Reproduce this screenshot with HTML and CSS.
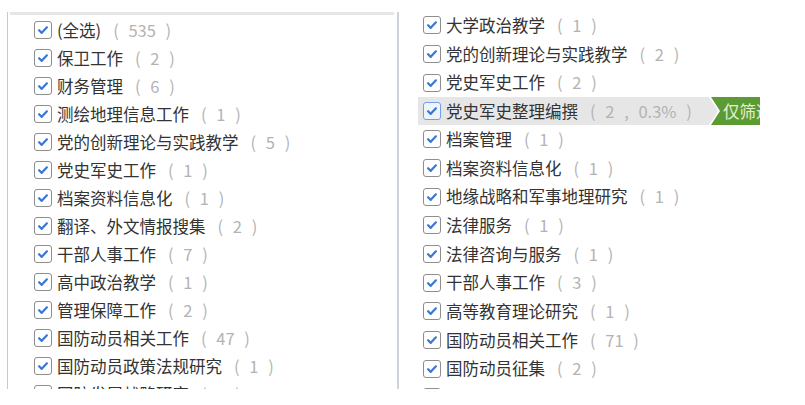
FILE: index.html
```html
<!DOCTYPE html>
<html lang="zh-CN">
<head>
<meta charset="utf-8">
<title>筛选</title>
<link rel="stylesheet" href="styles.css">
</head>
<body>
<div class="wrap">
  <div class="panel left">
    <div class="topbar"></div>
    <ul class="list">
      <li class="row"><span class="cb"><svg viewBox="0 0 18 18"><path d="M4.6 9.2 L7.6 12.2 L13.4 6"/></svg></span><span class="lbl">(全选)</span><span class="cnt">( 535 )</span></li>
      <li class="row"><span class="cb"><svg viewBox="0 0 18 18"><path d="M4.6 9.2 L7.6 12.2 L13.4 6"/></svg></span><span class="lbl">保卫工作</span><span class="cnt">( 2 )</span></li>
      <li class="row"><span class="cb"><svg viewBox="0 0 18 18"><path d="M4.6 9.2 L7.6 12.2 L13.4 6"/></svg></span><span class="lbl">财务管理</span><span class="cnt">( 6 )</span></li>
      <li class="row"><span class="cb"><svg viewBox="0 0 18 18"><path d="M4.6 9.2 L7.6 12.2 L13.4 6"/></svg></span><span class="lbl">测绘地理信息工作</span><span class="cnt">( 1 )</span></li>
      <li class="row"><span class="cb"><svg viewBox="0 0 18 18"><path d="M4.6 9.2 L7.6 12.2 L13.4 6"/></svg></span><span class="lbl">党的创新理论与实践教学</span><span class="cnt">( 5 )</span></li>
      <li class="row"><span class="cb"><svg viewBox="0 0 18 18"><path d="M4.6 9.2 L7.6 12.2 L13.4 6"/></svg></span><span class="lbl">党史军史工作</span><span class="cnt">( 1 )</span></li>
      <li class="row"><span class="cb"><svg viewBox="0 0 18 18"><path d="M4.6 9.2 L7.6 12.2 L13.4 6"/></svg></span><span class="lbl">档案资料信息化</span><span class="cnt">( 1 )</span></li>
      <li class="row"><span class="cb"><svg viewBox="0 0 18 18"><path d="M4.6 9.2 L7.6 12.2 L13.4 6"/></svg></span><span class="lbl">翻译、外文情报搜集</span><span class="cnt">( 2 )</span></li>
      <li class="row"><span class="cb"><svg viewBox="0 0 18 18"><path d="M4.6 9.2 L7.6 12.2 L13.4 6"/></svg></span><span class="lbl">干部人事工作</span><span class="cnt">( 7 )</span></li>
      <li class="row"><span class="cb"><svg viewBox="0 0 18 18"><path d="M4.6 9.2 L7.6 12.2 L13.4 6"/></svg></span><span class="lbl">高中政治教学</span><span class="cnt">( 1 )</span></li>
      <li class="row"><span class="cb"><svg viewBox="0 0 18 18"><path d="M4.6 9.2 L7.6 12.2 L13.4 6"/></svg></span><span class="lbl">管理保障工作</span><span class="cnt">( 2 )</span></li>
      <li class="row"><span class="cb"><svg viewBox="0 0 18 18"><path d="M4.6 9.2 L7.6 12.2 L13.4 6"/></svg></span><span class="lbl">国防动员相关工作</span><span class="cnt">( 47 )</span></li>
      <li class="row"><span class="cb"><svg viewBox="0 0 18 18"><path d="M4.6 9.2 L7.6 12.2 L13.4 6"/></svg></span><span class="lbl">国防动员政策法规研究</span><span class="cnt">( 1 )</span></li>
      <li class="row"><span class="cb"><svg viewBox="0 0 18 18"><path d="M4.6 9.2 L7.6 12.2 L13.4 6"/></svg></span><span class="lbl">国防发展战略研究</span><span class="cnt">( 1 )</span></li>
    </ul>
  </div>
  <div class="panel right">
    <ul class="list">
      <li class="row"><span class="cb"><svg viewBox="0 0 18 18"><path d="M4.6 9.2 L7.6 12.2 L13.4 6"/></svg></span><span class="lbl">大学政治教学</span><span class="cnt">( 1 )</span></li>
      <li class="row"><span class="cb"><svg viewBox="0 0 18 18"><path d="M4.6 9.2 L7.6 12.2 L13.4 6"/></svg></span><span class="lbl">党的创新理论与实践教学</span><span class="cnt">( 2 )</span></li>
      <li class="row"><span class="cb"><svg viewBox="0 0 18 18"><path d="M4.6 9.2 L7.6 12.2 L13.4 6"/></svg></span><span class="lbl">党史军史工作</span><span class="cnt">( 2 )</span></li>
      <li class="row hl"><span class="cb"><svg viewBox="0 0 18 18"><path d="M4.6 9.2 L7.6 12.2 L13.4 6"/></svg></span><span class="lbl">党史军史整理编撰</span><span class="cnt">( 2 , 0.3% )</span><span class="tag"><span class="tag-in">仅筛选此项</span></span></li>
      <li class="row"><span class="cb"><svg viewBox="0 0 18 18"><path d="M4.6 9.2 L7.6 12.2 L13.4 6"/></svg></span><span class="lbl">档案管理</span><span class="cnt">( 1 )</span></li>
      <li class="row"><span class="cb"><svg viewBox="0 0 18 18"><path d="M4.6 9.2 L7.6 12.2 L13.4 6"/></svg></span><span class="lbl">档案资料信息化</span><span class="cnt">( 1 )</span></li>
      <li class="row"><span class="cb"><svg viewBox="0 0 18 18"><path d="M4.6 9.2 L7.6 12.2 L13.4 6"/></svg></span><span class="lbl">地缘战略和军事地理研究</span><span class="cnt">( 1 )</span></li>
      <li class="row"><span class="cb"><svg viewBox="0 0 18 18"><path d="M4.6 9.2 L7.6 12.2 L13.4 6"/></svg></span><span class="lbl">法律服务</span><span class="cnt">( 1 )</span></li>
      <li class="row"><span class="cb"><svg viewBox="0 0 18 18"><path d="M4.6 9.2 L7.6 12.2 L13.4 6"/></svg></span><span class="lbl">法律咨询与服务</span><span class="cnt">( 1 )</span></li>
      <li class="row"><span class="cb"><svg viewBox="0 0 18 18"><path d="M4.6 9.2 L7.6 12.2 L13.4 6"/></svg></span><span class="lbl">干部人事工作</span><span class="cnt">( 3 )</span></li>
      <li class="row"><span class="cb"><svg viewBox="0 0 18 18"><path d="M4.6 9.2 L7.6 12.2 L13.4 6"/></svg></span><span class="lbl">高等教育理论研究</span><span class="cnt">( 1 )</span></li>
      <li class="row"><span class="cb"><svg viewBox="0 0 18 18"><path d="M4.6 9.2 L7.6 12.2 L13.4 6"/></svg></span><span class="lbl">国防动员相关工作</span><span class="cnt">( 71 )</span></li>
      <li class="row"><span class="cb"><svg viewBox="0 0 18 18"><path d="M4.6 9.2 L7.6 12.2 L13.4 6"/></svg></span><span class="lbl">国防动员征集</span><span class="cnt">( 2 )</span></li>
      <li class="row"><span class="cb"><svg viewBox="0 0 18 18"><path d="M4.6 9.2 L7.6 12.2 L13.4 6"/></svg></span><span class="lbl">国防教育</span><span class="cnt">( 1 )</span></li>
    </ul>
  </div>
</div>
</body>
</html>
```

FILE: styles.css
```css
html, body {
  margin: 0;
  padding: 0;
  background: #ffffff;
}

body {
  font-family: "Noto Sans CJK SC", "Noto Sans", sans-serif;
  font-size: 16.5px;
  color: #333333;
}

.wrap {
  display: flex;
  align-items: stretch;
  height: 389px;
  padding-top: 12px;
  box-sizing: border-box;
  overflow: hidden;
}

.panel {
  flex: none;
}

.left {
  margin-left: 7px;
  width: 388px;
  border-left: 1px solid #c9c9c9;
}

.topbar {
  margin-left: 2px;
  width: 384px;
  height: 3px;
  background: #e6e6e6;
}

.right {
  margin-left: 1px;
  width: 361px;
  border-left: 2px solid #ccd3dc;
  overflow: hidden;
}

.list {
  list-style: none;
  margin: 0;
  padding: 0;
}

.left .list {
  padding-left: 26px;
  margin-top: 1px;
}

.right .list {
  margin-top: -1px;
}

.row {
  display: flex;
  align-items: center;
  height: 28px;
  white-space: nowrap;
  line-height: 1;
}

.right .row {
  height: 28.67px;
  margin-left: 19px;
  padding-left: 5px;
  position: relative;
}

.cb {
  flex: none;
  width: 18px;
  height: 18px;
  box-sizing: border-box;
  border: 1.5px solid #8e8e8e;
  border-radius: 3px;
  background: #ffffff;
  margin-right: 5px;
  display: flex;
  align-items: center;
  justify-content: center;
}

.cb svg {
  width: 16px;
  height: 16px;
}

.cb path {
  fill: none;
  stroke: #3b78d4;
  stroke-width: 2.5;
  stroke-linecap: round;
  stroke-linejoin: round;
}

.lbl {
  color: #333333;
}

.cnt {
  color: #b3b3b3;
  margin-left: 12px;
  white-space: pre;
  word-spacing: 6px;
}

.right .row.hl {
  height: 28px;
  width: 300px;
  box-sizing: border-box;
  background: #e6e6e6;
}

.hl .cb {
  border-color: #6f9fe6;
  background: #eef4fd;
}

.tag {
  position: absolute;
  left: 291px;
  top: 0;
  height: 28px;
  width: 90px;
  background: #ffffff;
  clip-path: polygon(0 0, 100% 0, 100% 100%, 0 100%, 9px 50%);
}

.tag-in {
  position: absolute;
  left: 2px;
  top: 0;
  right: 0;
  bottom: 0;
  background: #5c9b33;
  color: #e3efcf;
  padding-left: 12px;
  display: flex;
  align-items: center;
  clip-path: polygon(0 0, 100% 0, 100% 100%, 0 100%, 9px 50%);
}
```
